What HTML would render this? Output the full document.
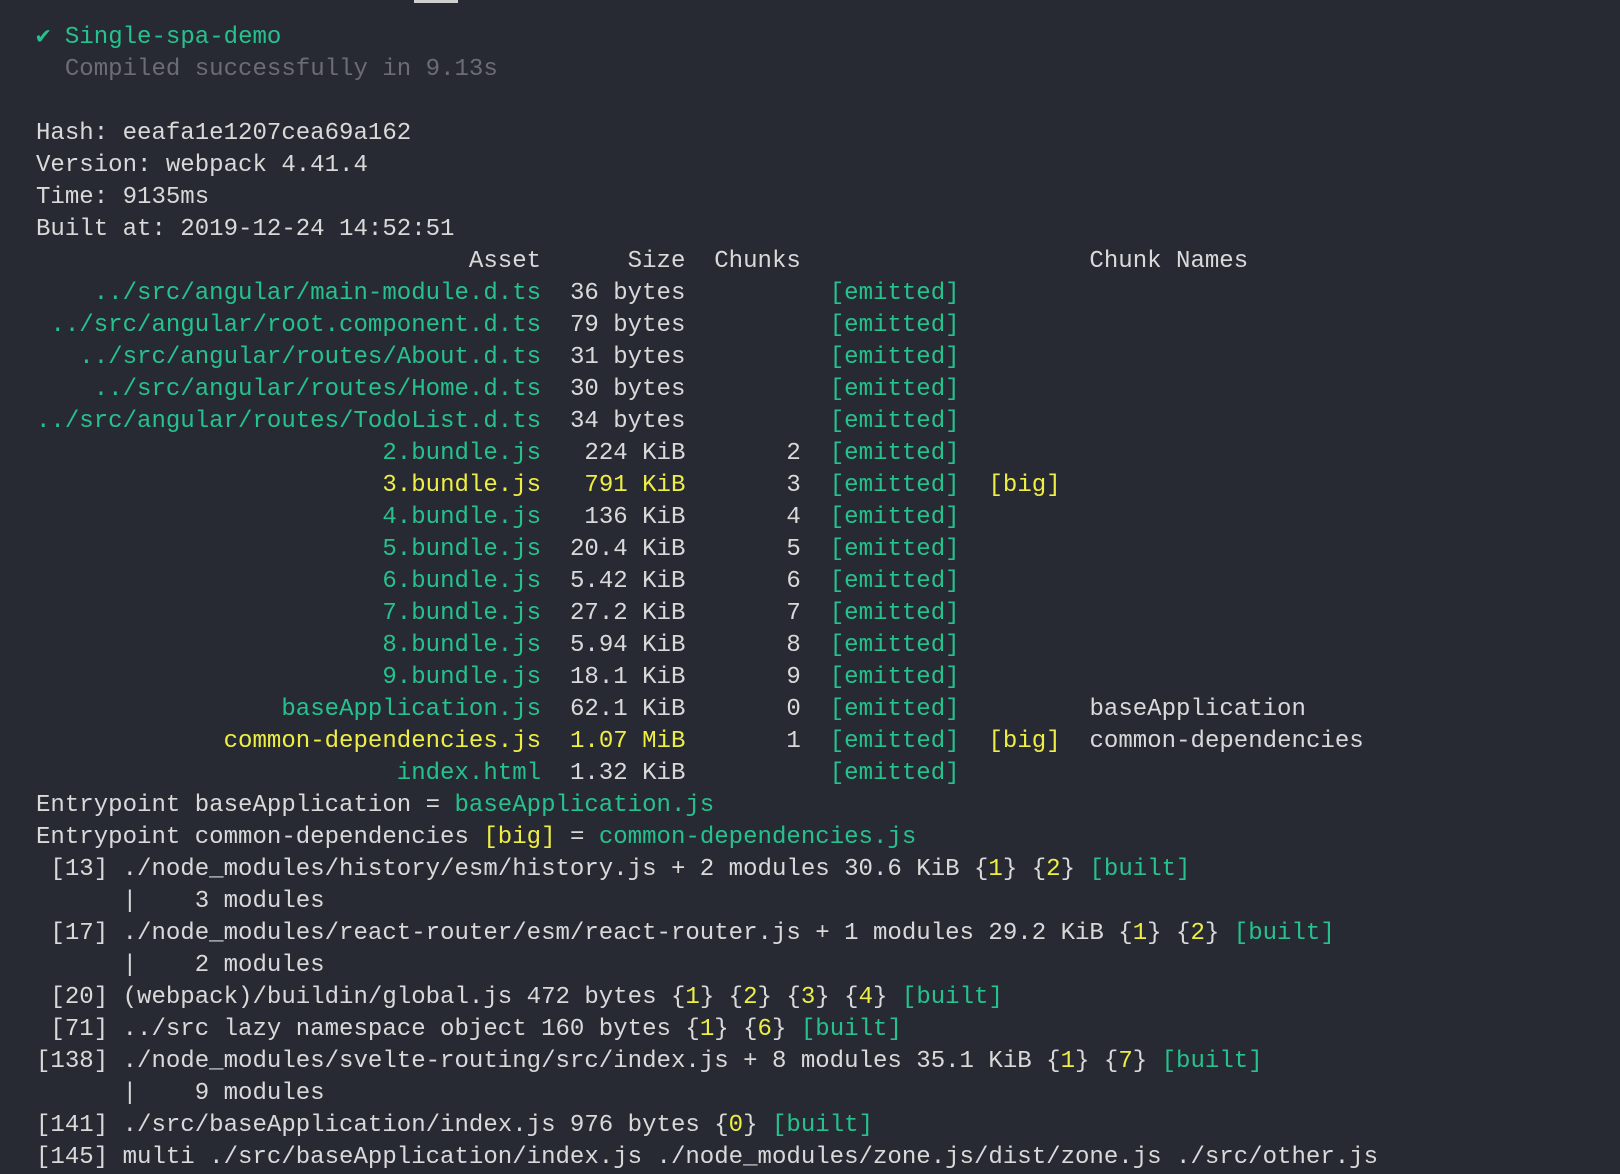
<!DOCTYPE html>
<html><head><meta charset="utf-8"><style>
html,body{margin:0;padding:0;background:#282a33;width:1620px;height:1148px;overflow:hidden}
pre{position:absolute;left:36px;top:22px;margin:0;font-family:"Liberation Mono","DejaVu Sans Mono",monospace;font-size:24.05px;line-height:32px;color:#d9d9d9;white-space:pre}
.g{color:#25c28e}.y{color:#eeee44}.d{color:#6b6d72}
.bar{position:absolute;left:414px;top:0;width:44px;height:3px;background:#d0d0d0}
</style></head><body>
<div class="bar"></div>
<pre><span class="g">✔ Single-spa-demo</span>
  <span class="d">Compiled successfully in 9.13s</span>

Hash: eeafa1e1207cea69a162
Version: webpack 4.41.4
Time: 9135ms
Built at: 2019-12-24 14:52:51
                              Asset      Size  Chunks                    Chunk Names
    <span class="g">../src/angular/main-module.d.ts</span>  36 bytes          <span class="g">[emitted]</span>
 <span class="g">../src/angular/root.component.d.ts</span>  79 bytes          <span class="g">[emitted]</span>
   <span class="g">../src/angular/routes/About.d.ts</span>  31 bytes          <span class="g">[emitted]</span>
    <span class="g">../src/angular/routes/Home.d.ts</span>  30 bytes          <span class="g">[emitted]</span>
<span class="g">../src/angular/routes/TodoList.d.ts</span>  34 bytes          <span class="g">[emitted]</span>
                        <span class="g">2.bundle.js</span>   224 KiB       2  <span class="g">[emitted]</span>
                        <span class="y">3.bundle.js</span>   <span class="y">791 KiB</span>       3  <span class="g">[emitted]</span>  <span class="y">[big]</span>
                        <span class="g">4.bundle.js</span>   136 KiB       4  <span class="g">[emitted]</span>
                        <span class="g">5.bundle.js</span>  20.4 KiB       5  <span class="g">[emitted]</span>
                        <span class="g">6.bundle.js</span>  5.42 KiB       6  <span class="g">[emitted]</span>
                        <span class="g">7.bundle.js</span>  27.2 KiB       7  <span class="g">[emitted]</span>
                        <span class="g">8.bundle.js</span>  5.94 KiB       8  <span class="g">[emitted]</span>
                        <span class="g">9.bundle.js</span>  18.1 KiB       9  <span class="g">[emitted]</span>
                 <span class="g">baseApplication.js</span>  62.1 KiB       0  <span class="g">[emitted]</span>         baseApplication
             <span class="y">common-dependencies.js</span>  <span class="y">1.07 MiB</span>       1  <span class="g">[emitted]</span>  <span class="y">[big]</span>  common-dependencies
                         <span class="g">index.html</span>  1.32 KiB          <span class="g">[emitted]</span>
Entrypoint baseApplication = <span class="g">baseApplication.js</span>
Entrypoint common-dependencies <span class="y">[big]</span> = <span class="g">common-dependencies.js</span>
 [13] ./node_modules/history/esm/history.js + 2 modules 30.6 KiB {<span class="y">1</span>} {<span class="y">2</span>} <span class="g">[built]</span>
      |    3 modules
 [17] ./node_modules/react-router/esm/react-router.js + 1 modules 29.2 KiB {<span class="y">1</span>} {<span class="y">2</span>} <span class="g">[built]</span>
      |    2 modules
 [20] (webpack)/buildin/global.js 472 bytes {<span class="y">1</span>} {<span class="y">2</span>} {<span class="y">3</span>} {<span class="y">4</span>} <span class="g">[built]</span>
 [71] ../src lazy namespace object 160 bytes {<span class="y">1</span>} {<span class="y">6</span>} <span class="g">[built]</span>
[138] ./node_modules/svelte-routing/src/index.js + 8 modules 35.1 KiB {<span class="y">1</span>} {<span class="y">7</span>} <span class="g">[built]</span>
      |    9 modules
[141] ./src/baseApplication/index.js 976 bytes {<span class="y">0</span>} <span class="g">[built]</span>
[145] multi ./src/baseApplication/index.js ./node_modules/zone.js/dist/zone.js ./src/other.js
</pre>
</body></html>
